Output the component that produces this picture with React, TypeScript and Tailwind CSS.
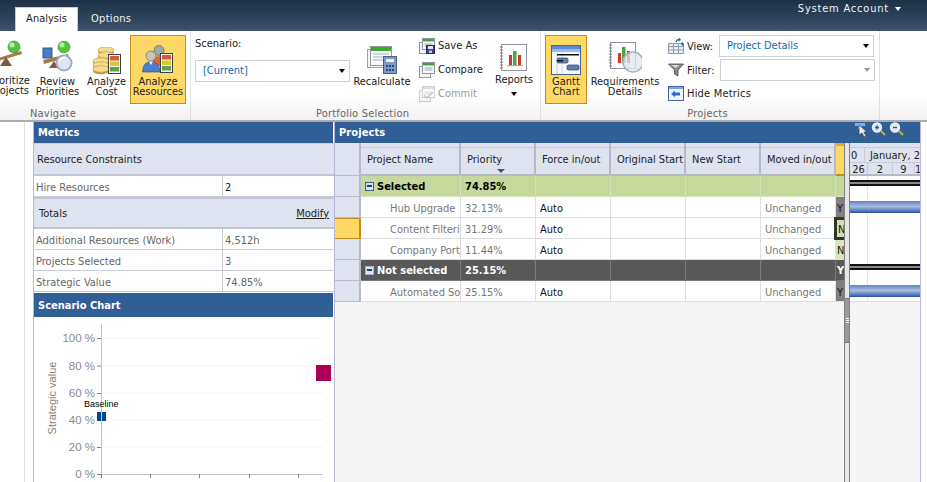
import React from "react";

const FONT = "font-['DejaVu_Sans_Condensed','Noto_Sans',sans-serif]";

function Ball({ x, y, r = 6 }: { x: number; y: number; r?: number }) {
  return (
    <>
      <circle cx={x} cy={y} r={r} fill="#58c13f" stroke="#3e9a2c" strokeWidth="0.7" />
      <circle cx={x - 2} cy={y - 2} r={r / 2.4} fill="#b9eea5" />
    </>
  );
}
function Prioritize() {
  return (
    <svg width="24" height="36" viewBox="0 0 24 36" fill="none">
      <path d="M-2 21 L21 14 L22 17 L-2 24Z" fill="#a9794c" />
      <path d="M6 20 L12 29 L0 29Z" fill="#7d5a3c" />
      <Ball x={14} y={10} />
    </svg>
  );
}
function ReviewIcon() {
  return (
    <svg width="34" height="34" viewBox="0 0 34 34" fill="none">
      <rect x="2" y="7" width="9" height="10" fill="#4a7cc4" stroke="#2f5c9a" />
      <path d="M2 19 L27 13 L28 16 L3 23Z" fill="#a9794c" />
      <path d="M13 20 L18 27 L8 27Z" fill="#7d5a3c" />
      <Ball x={23} y={6} />
      <circle cx="23" cy="22" r="7.5" fill="#dfe8f2" stroke="#a5adb8" strokeWidth="2" />
      <path d="M18 20 A6 6 0 0 1 25 16.5" stroke="#fff" strokeWidth="1.5" />
    </svg>
  );
}
function Meter({ x, y, w = 11, h = 25 }: { x: number; y: number; w?: number; h?: number }) {
  const b = (h - 4) / 3;
  return (
    <g>
      <rect x={x} y={y} width={w} height={h} fill="#f4f4f2" stroke="#3f4245" />
      <rect x={x + 1.5} y={y + 1.5} width={w - 3} height={b - 0.5} fill="#d9573a" />
      <rect x={x + 1.5} y={y + 2 + b} width={w - 3} height={b - 0.5} fill="#d8c92e" />
      <rect x={x + 1.5} y={y + 2.5 + 2 * b} width={w - 3} height={b - 0.5} fill="#5ea04e" />
    </g>
  );
}
function Coin({ x, y, w = 16 }: { x: number; y: number; w?: number }) {
  return (
    <g>
      <ellipse cx={x} cy={y + 2} rx={w / 2} ry="3.2" fill="#c99a33" />
      <ellipse cx={x} cy={y} rx={w / 2} ry="3.2" fill="#f3dc8d" stroke="#c69a3a" strokeWidth="0.6" />
    </g>
  );
}
function CostIcon() {
  return (
    <svg width="30" height="28" viewBox="0 0 30 28" fill="none">
      <Coin x={14} y={3} />
      <Coin x={14} y={8} />
      <Coin x={9} y={14} />
      <Coin x={9} y={18} />
      <Coin x={9} y={22} />
      <Meter x={16.5} y={7.5} w={12} h={19} />
    </svg>
  );
}
function ResourcesIcon() {
  return (
    <svg width="32" height="30" viewBox="0 0 32 30" fill="none">
      <circle cx="17" cy="5.5" r="5" fill="#a5a5a5" stroke="#666" strokeWidth="0.7" />
      <path d="M10 21 Q10 11 17 11 Q24 11 24 21Z" fill="#e0663a" />
      <circle cx="9" cy="11" r="5" fill="#c9c3bd" stroke="#6f6a65" strokeWidth="0.7" />
      <path d="M0.5 27 Q1 16.5 9 16.5 Q17.5 16.5 18 27Z" fill="#4d7fd1" stroke="#2d528f" strokeWidth="0.7" />
      <path d="M7 16.5 L9 20 L11 16.5Z" fill="#fff" />
      <Meter x={18.5} y={8.5} w={12} h={19} />
    </svg>
  );
}
function RecalcIcon() {
  return (
    <svg width="32" height="30" viewBox="0 0 32 30" fill="none">
      <rect x="1.5" y="4.5" width="20" height="18" fill="#f3f5f6" stroke="#9da4aa" />
      <rect x="4.5" y="1.5" width="21" height="19" fill="#fbfbfb" stroke="#8f969c" />
      <rect x="5" y="2" width="20" height="4" fill="#40a832" />
      <path d="M7 9H23M7 12H23M7 15H19" stroke="#9fb2c6" />
      <rect x="17.5" y="11.5" width="13" height="17" fill="#7f9cc4" stroke="#4a5f80" />
      <rect x="20" y="14" width="8" height="3" fill="#eef3f8" />
      <path d="M20 20h2v2h-2zM23 20h2v2h-2zM26 20h2v2h-2zM20 24h2v2h-2zM23 24h2v2h-2zM26 24h2v2h-2z" fill="#23408a" />
    </svg>
  );
}
function DocStack({ disabled, disk }: { disabled?: boolean; disk?: boolean }) {
  return (
    <svg width="16" height="16" viewBox="0 0 16 16" fill="none" opacity={disabled ? 0.45 : 1}>
      <rect x="0.5" y="4.5" width="11" height="11" fill="#f2f4f6" stroke="#8c96a0" />
      <rect x="3.5" y="0.5" width="12" height="11" fill="#fdfdfd" stroke="#8c96a0" />
      <rect x="4" y="1" width="11" height="2.5" fill={disabled ? "#bbb" : "#40a832"} />
      <path d="M5.5 6H13.5M5.5 8H13.5" stroke="#8ea4bc" />
      {disk && (
        <>
          <rect x="7.5" y="7.5" width="8" height="8" fill="#3b3f9c" stroke="#24276b" />
          <rect x="9" y="8" width="5" height="3" fill="#e5e8f2" />
          <rect x="10" y="12.5" width="3" height="2.5" fill="#c6c9e0" />
        </>
      )}
      {disabled && <path d="M5 9L8 12L14 6" stroke="#888" strokeWidth="1.6" />}
    </svg>
  );
}
function ReportIcon() {
  return (
    <svg width="30" height="30" viewBox="0 0 30 30" fill="none">
      <rect x="2.5" y="1.5" width="25" height="26" fill="#fdfdfe" stroke="#8c96a3" />
      <path d="M1 4h3M1 7h3M1 10h3M1 13h3M1 16h3M1 19h3M1 22h3M1 25h3" stroke="#7d7d7d" />
      <rect x="10" y="12" width="3" height="10" fill="#d9342c" />
      <rect x="14" y="8" width="3.5" height="14" fill="#49a83c" />
      <rect x="19" y="12" width="3" height="10" fill="#d9342c" />
      <path d="M8 22.5H24" stroke="#9aa" />
    </svg>
  );
}
function GanttIcon() {
  return (
    <svg width="30" height="30" viewBox="0 0 30 30" fill="none">
      <rect x="0.5" y="0.5" width="29" height="29" fill="#f7f9fc" stroke="#47638f" />
      <rect x="1" y="1" width="28" height="3" fill="#5d89d8" />
      <rect x="1" y="4" width="28" height="3" fill="#9bb8e8" />
      <path d="M6 7V29M11 7V29" stroke="#c9d8ec" />
      <rect x="6" y="9" width="22" height="1.5" fill="#111" />
      <rect x="6" y="13" width="11" height="5" rx="1.5" fill="#5d7fae" stroke="#2a3f5f" strokeWidth="0.7" />
      <rect x="6" y="15" width="6" height="1.5" fill="#111" />
      <rect x="16" y="20" width="12" height="5" rx="1.5" fill="#5d7fae" stroke="#2a3f5f" strokeWidth="0.7" />
    </svg>
  );
}
function ReqIcon() {
  return (
    <svg width="34" height="34" viewBox="0 0 34 34" fill="none">
      <rect x="2.5" y="1.5" width="25" height="26" fill="#fdfdfe" stroke="#8c96a3" />
      <path d="M1 4h3M1 7h3M1 10h3M1 13h3M1 16h3M1 19h3M1 22h3M1 25h3" stroke="#7d7d7d" />
      <rect x="10" y="12" width="3" height="10" fill="#d9342c" />
      <rect x="14" y="6" width="3.5" height="16" fill="#49a83c" />
      <rect x="19" y="10" width="3" height="12" fill="#d9342c" />
      <circle cx="25" cy="21" r="10" fill="#dfe6ee" fillOpacity="0.75" stroke="#a9b0b8" strokeWidth="1.5" />
    </svg>
  );
}
function ViewIcon() {
  return (
    <svg width="16" height="16" viewBox="0 0 16 16" fill="none">
      <rect x="0.5" y="5.5" width="15" height="10" fill="#e9eef5" stroke="#8b9bb0" />
      <path d="M0.5 8.5H15.5M0.5 12H15.5M5.5 5.5V15.5M10.5 5.5V15.5" stroke="#8b9bb0" />
      <path d="M8 4 Q9 1 12 1.5 L11 0 M12 1.5 L10.5 3 M14 4 L15 7 L13 6" stroke="#2f66b8" strokeWidth="1.2" />
    </svg>
  );
}
function FilterIcon() {
  return (
    <svg width="16" height="14" viewBox="0 0 16 14" fill="none">
      <path d="M0.5 1 H15.5 L10 7 V13 L6.5 11 V7Z" fill="#8c8c8c" stroke="#444" strokeWidth="0.8" />
      <path d="M3 2 H11 L8 5Z" fill="#ddd" />
    </svg>
  );
}
function HideIcon() {
  return (
    <svg width="16" height="15" viewBox="0 0 16 15" fill="none">
      <rect x="0.5" y="0.5" width="15" height="14" fill="#f3f7fd" stroke="#3e66a8" />
      <rect x="1" y="1" width="14" height="2" fill="#7ea3dc" />
      <path d="M3 8 L7 4.8 V6.6 H12 V9.4 H7 V11.2Z" fill="#2b6bc9" />
    </svg>
  );
}
function Caret({ color = "border-t-black" }: { color?: string }) {
  return <span className={`inline-block w-0 h-0 border-x-[3.5px] border-x-transparent border-t-[4px] ${color}`} />;
}

function BigButton({ label, icon, active, width }: { label: React.ReactNode; icon: React.ReactNode; active?: boolean; width: string }) {
  return (
    <div
      className={`${width} h-[69px] shrink-0 flex flex-col items-center text-center leading-[10px] text-[11px] text-[#222] ${
        active ? "bg-[#ffd966] border border-[#c38a22]" : "border border-transparent"
      }`}
    >
      <div className="h-[38px] flex items-end justify-center mt-[1px]">{icon}</div>
      <div className="mt-[2px]">{label}</div>
    </div>
  );
}
function SmallButton({ icon, label, disabled }: { icon: React.ReactNode; label: string; disabled?: boolean }) {
  return (
    <div className={`flex items-center gap-[3px] h-[16px] text-[11px] ${disabled ? "text-[#9a9a9a]" : "text-[#222]"}`}>
      {icon}
      <span>{label}</span>
    </div>
  );
}
function Group({ width, title, titleClass, children }: { width: string; title: string; titleClass: string; children: React.ReactNode }) {
  return (
    <div className={`${width} shrink-0 h-full flex flex-col border-r border-[#e0e0e4]`}>
      <div className="h-[73px] shrink-0 flex items-start pt-[4px] overflow-hidden">{children}</div>
      <div className={`${titleClass} h-[16px] shrink-0 text-center text-[11px] tracking-[0.2px] text-[#666] leading-[20px]`}>{title}</div>
    </div>
  );
}

function TopBar() {
  return (
    <div className="h-[31px] shrink-0 bg-gradient-to-b from-[#1d3046] to-[#3c5369] relative flex items-end text-[11px]">
      <div className="w-[15px]" />
      <div className="w-[63px] h-[24px] bg-white border-x border-t border-[#c8ccd2] flex items-center justify-center text-[#222]">Analysis</div>
      <div className="ml-[13px] h-[24px] flex items-center tracking-[0.3px] text-[#f0f2f4]">Options</div>
      <div className="ml-auto mb-[15px] mr-[26px] h-[14px] flex items-center gap-[6px] tracking-[0.8px] text-[#f2f4f6]">
        <span>System Account</span>
        <Caret color="border-t-white" />
      </div>
    </div>
  );
}

function Ribbon() {
  return (
    <div className="h-[91px] shrink-0 flex bg-gradient-to-b from-white from-[70%] to-[#f3f1f4] border-b-2 border-[#a9adb2]">
      <Group width="w-[191px]" title="Navigate" titleClass="pr-[84px]">
        <div className="w-[36px] -ml-[1px] shrink-0 overflow-hidden text-right pr-[6px]">
          <div className="h-[38px] flex items-end justify-end pr-[5px]"><Prioritize /></div>
          <div className="text-[11px] leading-[10px] whitespace-nowrap mt-[3px] text-[#222]">oritize<br />ojects</div>
        </div>
        <BigButton width="w-[49px] -ml-[2px]" label={<>Review<br />Priorities</>} icon={<ReviewIcon />} />
        <BigButton width="w-[49px]" label={<>Analyze<br />Cost</>} icon={<CostIcon />} />
        <BigButton width="w-[56px] ml-[-1px]" active label={<>Analyze<br />Resources</>} icon={<ResourcesIcon />} />
      </Group>
      <Group width="w-[350px]" title="Portfolio Selection" titleClass="pr-[6px]">
        <div className="w-[155px] ml-[4px] shrink-0 pt-[2px]">
          <div className="text-[11px] text-[#222] leading-[14px]">Scenario:</div>
          <div className="mt-[9px] h-[22px] border border-[#ccd2d9] flex items-center justify-between pl-[7px] pr-[4px] text-[11px] text-[#0b6cb5]">
            <span>[Current]</span>
            <Caret />
          </div>
        </div>
        <div className="w-[62px] ml-[1px] shrink-0 flex flex-col items-center text-[11px] text-[#222] leading-[10px]">
          <div className="h-[38px] flex items-end mt-[2px]"><RecalcIcon /></div>
          <div className="mt-[2px]">Recalculate</div>
        </div>
        <div className="w-[76px] shrink-0 flex flex-col gap-[8px] pl-[6px] pt-[3px]">
          <SmallButton icon={<DocStack disk />} label="Save As" />
          <SmallButton icon={<DocStack />} label="Compare" />
          <SmallButton icon={<DocStack disabled />} label="Commit" disabled />
        </div>
        <div className="w-[50px] shrink-0 flex flex-col items-center text-[11px] text-[#222] leading-[10px]">
          <div className="h-[38px] flex items-end"><ReportIcon /></div>
          <div className="mt-[2px]">Reports</div>
          <div className="mt-[3px]"><Caret /></div>
        </div>
      </Group>
      <Group width="w-[339px]" title="Projects" titleClass="pr-[5px]">
        <BigButton width="w-[42px] ml-[4px]" active label={<>Gantt<br />Chart</>} icon={<GanttIcon />} />
        <BigButton width="w-[72px] ml-[2px]" label={<>Requirements<br />Details</>} icon={<ReqIcon />} />
        <div className="ml-[7px] flex flex-col gap-[6px] text-[11px] text-[#222]">
          <div className="flex items-center h-[18px] mt-[2px]">
            <ViewIcon />
            <span className="ml-[3px] w-[34px] pt-[2px]">View:</span>
            <div className="w-[155px] h-[22px] -ml-[2px] border border-[#ccd2d9] flex items-center justify-between pl-[7px] pr-[4px] text-[#0b6cb5]">
              <span className="pt-[1px]">Project Details</span>
              <Caret />
            </div>
          </div>
          <div className="flex items-center h-[18px]">
            <FilterIcon />
            <span className="ml-[3px] w-[34px] pt-[2px]">Filter:</span>
            <div className="w-[155px] h-[22px] -ml-[1px] border border-[#ccd2d9] flex items-center justify-end pr-[4px]">
              <Caret color="border-t-[#999]" />
            </div>
          </div>
          <div className="flex items-center h-[18px] -mt-[1px]">
            <HideIcon />
            <span className="ml-[3px] pt-[2px] tracking-[0.2px]">Hide Metrics</span>
          </div>
        </div>
      </Group>
    </div>
  );
}

function PanelHeader({ title, height = "h-[21px] pt-[2px]" }: { title: string; height?: string }) {
  return (
    <div className={`${height} shrink-0 mr-[1px] bg-[#2f5f94] text-white font-bold text-[11px] pl-[4px] flex items-center`}>{title}</div>
  );
}
function MetricRow({ label, value, dark }: { label: string; value: string; dark?: boolean }) {
  return (
    <div className="h-[21px] flex border-b border-[#c9ccd6] text-[11px] leading-[23px] bg-white">
      <div className="w-[189px] pl-[2px] border-r border-[#c9ccd6] text-[#666]">{label}</div>
      <div className={`pl-[2px] ${dark ? "text-[#111]" : "text-[#666]"}`}>{value}</div>
    </div>
  );
}
function Chart() {
  const ys = [338, 365.5, 393, 420, 447];
  const labels = ["100 %", "80 %", "60 %", "40 %", "20 %", "0 %"];
  const yl = [338, 365.5, 393, 420, 447, 474];
  return (
    <svg width="300" height="165" viewBox="34 317 300 165" className="block" style={{ fontFamily: "'Liberation Sans', sans-serif" }}>
      {ys.map((y) => (
        <line key={y} x1="101" x2="323" y1={y} y2={y} stroke="#f3f4f9" />
      ))}
      <line x1="101.5" x2="101.5" y1="324" y2="474" stroke="#c4c4c4" />
      <line x1="101" x2="323" y1="474.5" y2="474.5" stroke="#c4c4c4" />
      {yl.map((y) => (
        <line key={y} x1="97" x2="101" y1={y + 0.5} y2={y + 0.5} stroke="#808080" />
      ))}
      {[101, 150, 199, 249, 298].map((x) => (
        <line key={x} x1={x + 0.5} x2={x + 0.5} y1="474" y2="478" stroke="#808080" />
      ))}
      {labels.map((t, i) => (
        <text key={t} x="95" y={yl[i] + 4} textAnchor="end" fontSize="11.5" fill="#8a8a8a">{t}</text>
      ))}
      <text x="56" y="398" transform="rotate(-90 56 398)" textAnchor="middle" fontSize="11" fill="#8a7f78">Strategic value</text>
      <rect x="97" y="412" width="9" height="9" fill="#004b8d" />
      <line x1="101.5" x2="101.5" y1="412" y2="421" stroke="#b9cfe4" />
      <text x="84" y="407" fontSize="9" fill="#000">Baseline</text>
      <rect x="316" y="365" width="15" height="16" fill="#ab0057" />
    </svg>
  );
}
function MetricsPanel() {
  return (
    <div className="w-[301px] shrink-0 flex flex-col border-l border-[#bab6d6] bg-white">
      <PanelHeader title="Metrics" />
      <div className="h-[33px] shrink-0 bg-[#dfe3ef] border-b-2 border-[#c3c6d2] border-t border-t-[#c9ccd6] flex items-center pl-[3px] pt-[2px] text-[11px] text-[#222]">Resource Constraints</div>
      <MetricRow label="Hire Resources" value="2" dark />
      <div className="h-[32px] shrink-0 bg-[#dfe3ef] border-y-2 border-[#c3c6d2] flex items-center justify-between pl-[5px] pr-[5px] pt-[2px] text-[11px] text-[#222]">
        <span>Totals</span>
        <span className="underline">Modify</span>
      </div>
      <MetricRow label="Additional Resources (Work)" value="4,512h" />
      <MetricRow label="Projects Selected" value="3" />
      <MetricRow label="Strategic Value" value="74.85%" />
      <PanelHeader title="Scenario Chart" height="h-[24px] mt-[1px] pt-[3px]" />
      <Chart />
    </div>
  );
}

const COLS = ["w-[100px]", "w-[75px]", "w-[75px]", "w-[75px]", "w-[75px]", "w-[75px]"];
const HEADS = ["Project Name", "Priority", "Force in/out", "Original Start", "New Start", "Moved in/out"];

function RowHead({ active, height = "h-[21px]" }: { active?: boolean; height?: string }) {
  return (
    <div className={`w-[26px] ${height} shrink-0 border-r-2 border-b ${active ? "bg-[#ffd966] border-[#c58a22] border-y" : "bg-[#dfe3ef] border-[#b9bcc8]"}`} />
  );
}
function MinusBox({ dark }: { dark?: boolean }) {
  return (
    <span className={`inline-flex items-center justify-center w-[9px] h-[9px] mr-[3px] border ${dark ? "border-[#9fb4d0] bg-[#dbe5f2]" : "border-[#3d5f8f] bg-[#dbe5f2]"}`}>
      <span className="block w-[5px] h-[1.5px] bg-[#1e3f6f]" />
    </span>
  );
}
function GroupRow({ name, pct, dark, tail }: { name: string; pct: string; dark?: boolean; tail: string }) {
  const bg = dark ? "bg-[#595959] text-white border-[#7a7a7a]" : "bg-[#c6d89c] text-black border-[#d7e2b8]";
  return (
    <div className="flex h-[21px]">
      <RowHead />
      <div className={`${COLS[0]} ${bg} border-r border-b pl-[4px] flex items-center font-bold text-[11px] leading-[14px]`}>
        <MinusBox dark={dark} />
        <span className="pt-[2px]">{name}</span>
      </div>
      <div className={`${COLS[1]} ${bg} border-r border-b pl-[4px] pt-[2px] flex items-center font-bold text-[11px] leading-[14px]`}>{pct}</div>
      {COLS.slice(2).map((c, i) => (
        <div key={i} className={`${c} ${bg} border-r border-b`} />
      ))}
      <div className={`w-[8px] ${bg} border-b overflow-hidden pl-[1px] text-[11px] font-bold leading-[22px]`}>{tail}</div>
    </div>
  );
}
function DataRow({ name, pct, active, tail, tailDark, focus }: { name: string; pct: string; active?: boolean; tail: string; tailDark?: boolean; focus?: boolean }) {
  const cell = "border-r border-b border-[#dedede] h-[21px] overflow-hidden whitespace-nowrap text-[11px] leading-[24px]";
  return (
    <div className="flex h-[21px] bg-white">
      <RowHead active={active} />
      <div className={`${COLS[0]} ${cell} pl-[29px] text-[#777]`}>{name}</div>
      <div className={`${COLS[1]} ${cell} pl-[4px] text-[#777]`}>{pct}</div>
      <div className={`${COLS[2]} ${cell} pl-[4px] text-[#111]`}>Auto</div>
      <div className={`${COLS[3]} ${cell}`} />
      <div className={`${COLS[4]} ${cell}`} />
      <div className={`${COLS[5]} ${cell} pl-[4px] text-[#777]`}>Unchanged</div>
      {focus ? (
        <div className="w-[10px] -ml-[2px] h-[23px] -mt-[1px] relative overflow-hidden text-[11px] leading-[19px] pl-[1px] text-[#111] bg-[#cfe0b0] border-y-[3px] border-l-[3px] border-[#333]">
          {tail}
        </div>
      ) : (
        <div className={`w-[8px] h-[21px] overflow-hidden text-[11px] leading-[24px] pl-[1px] text-[#111] border-b border-[#dedede] ${tailDark ? "bg-[#7f7f7f]" : "bg-[#d8e7c0]"}`}>
          {tail}
        </div>
      )}
    </div>
  );
}
function ProjectTable() {
  return (
    <div className="w-[509px] shrink-0 flex flex-col">
      <div className="flex h-[33px] bg-[#dfe3ef]">
        <RowHead height="h-[33px]" />
        {HEADS.map((h, i) => (
          <div key={h} className={`${COLS[i]} h-[33px] relative border-r-2 border-[#b6b9c6] border-b-2 text-[11px] leading-[14px] text-[#222] whitespace-nowrap`}>
            <div className="h-[5px] border-b border-[#c9ccd6]" />
            <div className="pl-[6px] pt-[5px]">{h}</div>
            {i === 1 && <span className="absolute left-[36px] top-[26px] w-0 h-0 border-x-[4px] border-x-transparent border-t-[4px] border-t-[#555]" />}
          </div>
        ))}
        <div className="w-[8px] h-[33px] bg-[#ffd966] border-b-2 border-[#c58a22] border-t-[3px] border-t-[#e8a73a]" />
      </div>
      <GroupRow name="Selected" pct="74.85%" tail="" />
      <DataRow name="Hub Upgrade" pct="32.13%" tail="Y" tailDark />
      <DataRow name="Content Filtering" pct="31.29%" tail="N" active focus />
      <DataRow name="Company Portal" pct="11.44%" tail="N" />
      <GroupRow name="Not selected" pct="25.15%" dark tail="Y" />
      <DataRow name="Automated Solutions" pct="25.15%" tail="Y" tailDark />
    </div>
  );
}
function GanttBar({ dark }: { dark?: boolean }) {
  return dark ? (
    <div className="h-[21px] pt-[4px] relative">
      <div className="h-[6px] bg-[#8a8a8a] border-y-2 border-[#111]" />
    </div>
  ) : (
    <div className="h-[21px] pt-[4px] relative">
      <div className="h-[12px] bg-gradient-to-b from-[#5f84c7] via-[#a9bde0] to-[#3d66b3] border-b border-[#2b55a5]" />
    </div>
  );
}
function GanttPanel() {
  return (
    <div className="w-[70px] shrink-0 overflow-hidden">
      <div className="h-[33px] bg-[#dfe3ef] border-b-2 border-[#b6b9c6] text-[11px] text-[#222] overflow-hidden">
        <div className="h-[5px] border-b border-[#c9ccd6]" />
        <div className="flex h-[14px] leading-[15px]">
          <div className="w-[17px] border-r border-[#c9ccd6] pl-[1px]">0</div>
          <div className="pl-[5px] whitespace-nowrap">January, 2</div>
        </div>
        <div className="flex h-[12px] leading-[14px] border-t border-[#c9ccd6]">
          {[
            ["w-[18px]", "26"],
            ["w-[25px]", "2"],
            ["w-[22px]", "9"],
            ["w-[6px]", "1"],
          ].map(([w, t]) => (
            <div key={t} className={`${w} shrink-0 border-r border-[#c9ccd6] text-center whitespace-nowrap`}>{t}</div>
          ))}
        </div>
      </div>
      <div className="relative bg-white border-b border-[#dedede] h-[126px]">
        <div className="absolute left-[17px] top-0 bottom-0 w-px bg-[#e4e4e4]" />
        <GanttBar dark />
        <GanttBar />
        <div className="h-[21px]" />
        <div className="h-[21px]" />
        <GanttBar dark />
        <GanttBar />
      </div>
    </div>
  );
}
function ProjectsPanel() {
  return (
    <div className="w-[587px] shrink-0 flex flex-col border-x border-[#bab6d6] bg-[#f5f5f5]">
      <div className="h-[21px] shrink-0 bg-[#2f5f94] text-white font-bold text-[11px] pl-[4px] pt-[1px] tracking-[0.1px] flex items-center relative">
        Projects
        <svg className="absolute left-[520px] top-0" width="50" height="16" viewBox="0 0 50 16" fill="none">
          <path d="M0 1H10V4H7V7H3V4H0Z" fill="#7fb0e6" />
          <path d="M4 3L4 13L7 11L9 15L11 14L9 10L12 10Z" fill="#e8e8e8" stroke="#333" strokeWidth="0.6" />
          <circle cx="22" cy="5.5" r="4.5" fill="#dce6f4" stroke="#eef2f8" strokeWidth="1.4" />
          <path d="M20 5.5H24M22 3.5V7.5" stroke="#2f4f85" strokeWidth="1.3" />
          <path d="M26 9L30 13" stroke="#d4a52a" strokeWidth="2.2" />
          <circle cx="40" cy="5.5" r="4.5" fill="#dce6f4" stroke="#eef2f8" strokeWidth="1.4" />
          <path d="M38 5.5H42" stroke="#2f4f85" strokeWidth="1.3" />
          <path d="M44 9L48 13" stroke="#d4a52a" strokeWidth="2.2" />
        </svg>
      </div>
      <div className="flex flex-1 min-h-0">
        <ProjectTable />
        <div className="w-[6px] shrink-0 bg-[#e6e6e6] border-x border-[#808080] flex flex-col items-stretch">
          <div className="mt-[155px] h-[45px] bg-[#9a9a9a] border-y border-[#777] flex flex-col items-center justify-center gap-[1px]">
            <span className="block w-[3px] h-[1px] bg-white" />
            <span className="block w-[3px] h-[1px] bg-white" />
            <span className="block w-[3px] h-[1px] bg-white" />
          </div>
        </div>
        <GanttPanel />
      </div>
    </div>
  );
}

export default function App() {
  return (
    <div className={`${FONT} w-[927px] h-[482px] overflow-hidden flex flex-col bg-white`}>
      <TopBar />
      <Ribbon />
      <div className="flex flex-1 min-h-0">
        <div className="w-[33px] shrink-0 flex">
          <div className="w-[24px]" />
          <div className="w-[9px] border-l border-[#dedede]" />
        </div>
        <MetricsPanel />
        <ProjectsPanel />
      </div>
    </div>
  );
}
